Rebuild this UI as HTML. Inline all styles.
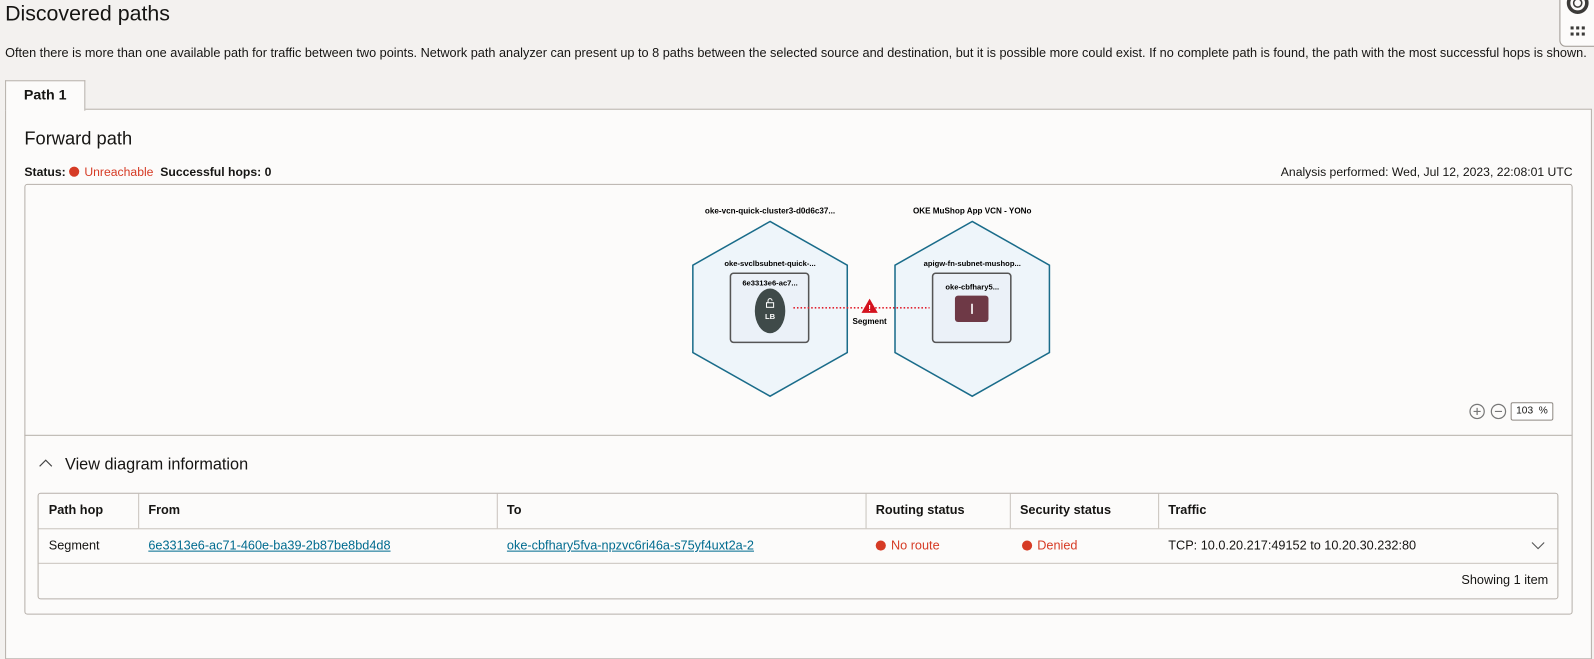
<!DOCTYPE html>
<html><head><meta charset="utf-8"><style>
html,body{margin:0;padding:0;width:1594px;height:638px;overflow:hidden;background:#f3f1ef;font-family:"Liberation Sans",Arial,sans-serif;color:#161513}
#w{position:absolute;left:0;top:0;width:1569px;height:628px;transform:scale(1.0159);transform-origin:0 0}
.a{position:absolute;white-space:nowrap}
.dot{display:inline-block;width:10px;height:10px;border-radius:50%;background:#d63b25;vertical-align:-1px;margin-right:5px}
a{color:#006b8f;text-decoration:underline}
</style></head><body><div id="w">
<div class="a" style="left:5px;top:2px;font-size:21px">Discovered paths</div>
<div class="a" style="left:5px;top:45px;font-size:12.5px">Often there is more than one available path for traffic between two points. Network path analyzer can present up to 8 paths between the selected source and destination, but it is possible more could exist. If no complete path is found, the path with the most successful hops is shown.</div>
<div class="a" style="left:1535px;top:-6px;width:40px;height:50px;border:1px solid #9e9892;border-radius:6px;background:#fcfbfa"></div>
<svg class="a" style="left:1538px;top:-4px" width="30" height="46"><circle cx="15" cy="7" r="9" fill="none" stroke="#3b3a38" stroke-width="3.5"/><circle cx="15" cy="7" r="4" fill="none" stroke="#3b3a38" stroke-width="1.5"/><g fill="#3b3a38"><rect x="8" y="30" width="3" height="3"/><rect x="13.5" y="30" width="3" height="3"/><rect x="19" y="30" width="3" height="3"/><rect x="8" y="36" width="3" height="3"/><rect x="13.5" y="36" width="3" height="3"/><rect x="19" y="36" width="3" height="3"/></g></svg>
<div class="a" style="left:5px;top:107px;width:1560px;height:540px;background:#fcfbfa;border:1px solid #b6b0aa"></div>
<div class="a" style="left:5px;top:79px;width:77px;height:29px;background:#fcfbfa;border:1px solid #b6b0aa;border-bottom:none;font-size:14px;font-weight:bold;text-align:center;line-height:26px">Path 1</div>
<div class="a" style="left:24px;top:126px;font-size:18px">Forward path</div>
<div class="a" style="left:24px;top:162px;font-size:12px"><b>Status:</b> <span class="dot"></span><span style="color:#d63b25">Unreachable</span>&nbsp; <b>Successful hops: 0</b></div>
<div class="a" style="right:21px;top:162px;font-size:12px">Analysis performed: Wed, Jul 12, 2023, 22:08:01 UTC</div>
<div class="a" style="left:24px;top:181px;width:1522px;height:422px;border:1px solid #b6b0aa;border-radius:3px"></div>
<div class="a" style="left:24px;top:428px;width:1523px;border-top:1px solid #b6b0aa"></div>
<svg class="a" style="left:600px;top:190px" width="520" height="210" font-family="Liberation Sans,Arial,sans-serif" font-weight="bold" text-anchor="middle">
<text x="158" y="20" font-size="8">oke-vcn-quick-cluster3-d0d6c37...</text>
<text x="357" y="20" font-size="8">OKE MuShop App VCN - YONo</text>
<polygon points="158,28 234,71 234,157 158,200 82,157 82,71" fill="#eef5fa" stroke="#1a6c8a" stroke-width="1.5"/>
<polygon points="357,28 433,71 433,157 357,200 281,157 281,71" fill="#eef5fa" stroke="#1a6c8a" stroke-width="1.5"/>
<text x="158" y="72" font-size="7.5">oke-svclbsubnet-quick-...</text>
<text x="357" y="72" font-size="7.5">apigw-fn-subnet-mushop...</text>
<rect x="119" y="79" width="77" height="68" rx="3" fill="#ebf1f8" stroke="#555" stroke-width="1.5"/>
<rect x="318" y="79" width="77" height="68" rx="3" fill="#ebf1f8" stroke="#555" stroke-width="1.5"/>
<text x="158" y="91" font-size="7.5">6e3313e6-ac7...</text>
<text x="357" y="95" font-size="7.5">oke-cbfhary5...</text>
<ellipse cx="158" cy="116" rx="15" ry="22" fill="#3f4a49"/>
<rect x="154.5" y="108" width="7" height="4.5" fill="none" stroke="#fff" stroke-width="1"/><path d="M156 108 v-2 a2 2 0 0 1 4 0" fill="none" stroke="#fff" stroke-width="1"/>
<text x="158" y="124" font-size="7.5" fill="#fff">LB</text>
<rect x="340" y="101" width="33" height="26" rx="3" fill="#6e3946"/>
<rect x="356" y="109" width="1.6" height="10" fill="#fff"/>
<line x1="181" y1="113" x2="315" y2="113" stroke="#e0202e" stroke-width="1.5" stroke-dasharray="1.5,2"/>
<polygon points="256,104 264,118 248,118" fill="#d4121e"/>
<text x="256" y="116" font-size="8" fill="#fff">!</text>
<text x="256" y="129" font-size="8">Segment</text>
</svg>
<svg class="a" style="left:1446px;top:397px" width="40" height="18"><circle cx="8" cy="8" r="7" fill="none" stroke="#777" stroke-width="1.2"/><path d="M8 4.5v7M4.5 8h7" stroke="#777" stroke-width="1.2"/><circle cx="29" cy="8" r="7" fill="none" stroke="#777" stroke-width="1.2"/><path d="M25.5 8h7" stroke="#777" stroke-width="1.2"/></svg>
<div class="a" style="left:1487px;top:396px;width:40px;height:16px;border:1px solid #8f8983;border-radius:2px;background:#fff;font-size:10px;line-height:16px;text-align:center">103 &nbsp;%</div>
<svg class="a" style="left:38px;top:451px" width="14" height="10"><path d="M1 8 L7 2 L13 8" fill="none" stroke="#444" stroke-width="1.1"/></svg>
<div class="a" style="left:64px;top:449px;font-size:16px">View diagram information</div>
<div class="a" style="left:37px;top:485px;width:1495px;height:103px;border:1px solid #b6b0aa;border-radius:3px;background:#fcfbfa"></div>
<div class="a" style="left:38px;top:520px;width:1495px;border-top:1px solid #c9c3bd"></div>
<div class="a" style="left:38px;top:554px;width:1495px;border-top:1px solid #c9c3bd"></div>
<div class="a" style="left:136px;top:486px;height:34px;border-left:1px solid #c9c3bd"></div>
<div class="a" style="left:489px;top:486px;height:34px;border-left:1px solid #c9c3bd"></div>
<div class="a" style="left:852px;top:486px;height:34px;border-left:1px solid #c9c3bd"></div>
<div class="a" style="left:994px;top:486px;height:34px;border-left:1px solid #c9c3bd"></div>
<div class="a" style="left:1140px;top:486px;height:34px;border-left:1px solid #c9c3bd"></div>
<div style="font-size:12.5px;font-weight:bold">
<div class="a" style="left:48px;top:495px">Path hop</div>
<div class="a" style="left:146px;top:495px">From</div>
<div class="a" style="left:499px;top:495px">To</div>
<div class="a" style="left:862px;top:495px">Routing status</div>
<div class="a" style="left:1004px;top:495px">Security status</div>
<div class="a" style="left:1150px;top:495px">Traffic</div>
</div>
<div style="font-size:12.5px">
<div class="a" style="left:48px;top:530px">Segment</div>
<div class="a" style="left:146px;top:530px"><a>6e3313e6-ac71-460e-ba39-2b87be8bd4d8</a></div>
<div class="a" style="left:499px;top:530px"><a>oke-cbfhary5fva-npzvc6ri46a-s75yf4uxt2a-2</a></div>
<div class="a" style="left:862px;top:530px;color:#d63b25"><span class="dot"></span>No route</div>
<div class="a" style="left:1006px;top:530px;color:#d63b25"><span class="dot"></span>Denied</div>
<div class="a" style="left:1150px;top:530px">TCP: 10.0.20.217:49152 to 10.20.30.232:80</div>
<div class="a" style="right:45px;top:564px">Showing 1 item</div>
</div>
<svg class="a" style="left:1507px;top:532px" width="14" height="10"><path d="M1 2 L7 8 L13 2" fill="none" stroke="#555" stroke-width="1.1"/></svg>
</div></body></html>
